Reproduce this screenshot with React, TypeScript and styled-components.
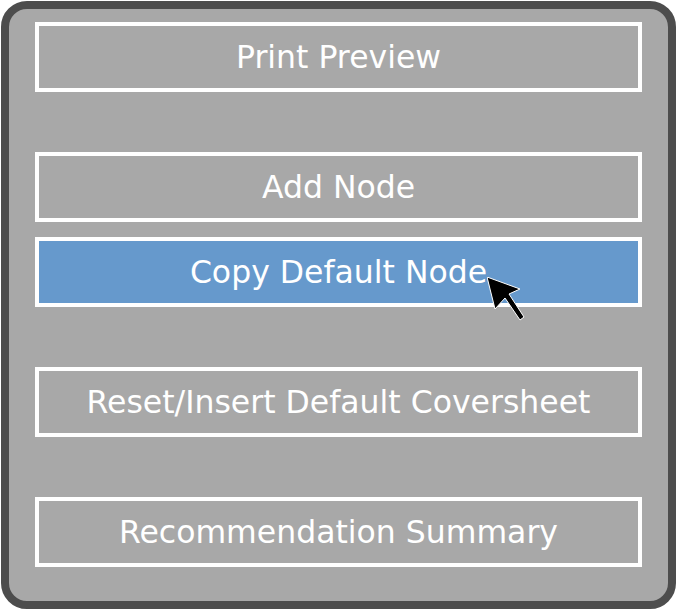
import React from 'react';
import styled, { createGlobalStyle } from 'styled-components';

const GlobalStyle = createGlobalStyle`
	* {
		box-sizing: border-box;
	}
	html, body {
		margin: 0;
		padding: 0;
		background: #fff;
	}
`;

const Panel = styled.div`
	position: relative;
	margin: 1px 0 0 1px;
	width: 675px;
	height: 608px;
	border: 8px solid #4d4d4d;
	border-radius: 26px;
	background: #a8a8a8;
	padding: 13px 0 0 26px;
	display: flex;
	flex-direction: column;
`;

const MenuButton = styled.div<{ $active?: boolean; $gap: number }>`
	flex: 0 0 70px;
	width: 607px;
	margin-top: ${(p) => p.$gap}px;
	border: 4px solid #fff;
	background: ${(p) => (p.$active ? '#6699cc' : 'transparent')};
	color: #fff;
	display: flex;
	align-items: center;
	justify-content: center;
	font-family: 'DejaVu Sans', 'Liberation Sans', sans-serif;
	font-size: 31.5px;
	user-select: none;
`;

const Cursor = styled.svg`
	position: absolute;
	left: 478px;
	top: 268px;
	pointer-events: none;
`;

const items = [
	{ label: 'Print Preview', gap: 0 },
	{ label: 'Add Node', gap: 60 },
	{ label: 'Copy Default Node', gap: 15, active: true },
	{ label: 'Reset/Insert Default Coversheet', gap: 60 },
	{ label: 'Recommendation Summary', gap: 60 },
];

export default function App() {
	return (
		<>
			<GlobalStyle />
			<Panel>
				{items.map((item) => (
					<MenuButton key={item.label} $gap={item.gap} $active={item.active}>
						{item.label}
					</MenuButton>
				))}
				<Cursor width="50" height="55" viewBox="0 0 50 55">
					{/* arrow pointer, tip at top-left */}
					<path d="M0 0 L33 12 L22 17 L37 40 L33 43 L18 21 L8 32 Z" fill="#000" stroke="#fff" strokeWidth="1" strokeLinejoin="miter" />
				</Cursor>
			</Panel>
		</>
	);
}
